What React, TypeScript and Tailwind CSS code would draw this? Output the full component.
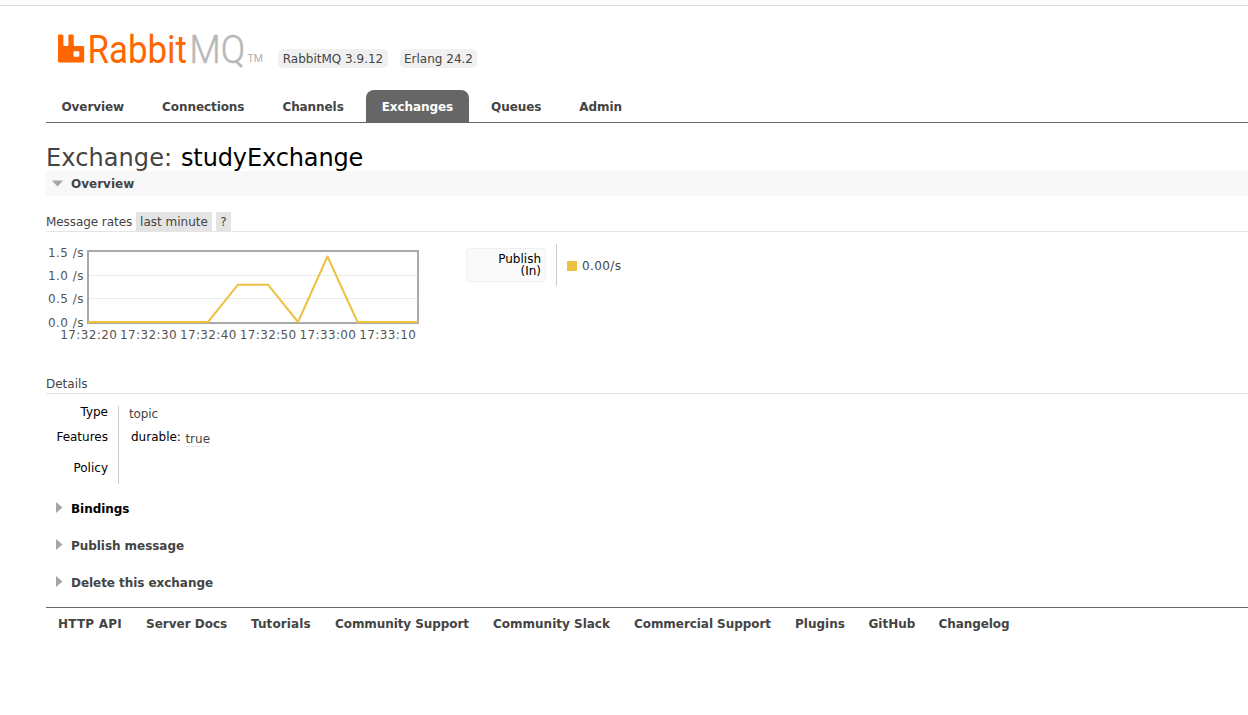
import clsx from "clsx";

const tabs = ["Overview", "Connections", "Channels", "Exchanges", "Queues", "Admin"];

const footerLinks = [
  { label: "HTTP API", width: "w-16 tracking-[0.2px]" },
  { label: "Server Docs", width: "w-[81px]" },
  { label: "Tutorials", width: "w-[60px] tracking-[0.1px]" },
  { label: "Community Support", width: "w-[134px] tracking-[-0.08px]" },
  { label: "Community Slack", width: "w-[117px]" },
  { label: "Commercial Support", width: "w-[137px] tracking-[-0.06px]" },
  { label: "Plugins", width: "w-[49.5px]" },
  { label: "GitHub", width: "w-[46px]" },
  { label: "Changelog", width: "tracking-[-0.08px]" },
];

const xLabels = ["17:32:20", "17:32:30", "17:32:40", "17:32:50", "17:33:00", "17:33:10"];
const yLabels = ["1.5 /s", "1.0 /s", "0.5 /s", "0.0 /s"];

function Logo() {
  return (
    <svg width="210" height="48" viewBox="0 -6 210 48" className="-mt-[6px] block" fontFamily="Roboto, sans-serif">
      <path
        fill="#ff6600"
        fillRule="evenodd"
        d="M2.200 4.500h3q1.200 0 1.200 1.200v9.300q0 1 1 1h3q1 0 1-1V5.700q0-1.200 1.200-1.200h2.900q1.200 0 1.200 1.200v9.300q0 1 1 1h8.300q1.200 0 1.200 1.200v14.100q0 1.200-1.200 1.200H2.200q-1.200 0-1.200-1.200V5.700q0-1.200 1.200-1.200zM17.500 21.200q-1 0-1 1v3.500q0 1 1 1h3.800q1 0 1-1v-3.500q0-1-1-1z"
      />
      <text x="30.500" y="32.700" fontSize="38.500" fill="#ff6600" textLength="99.500" lengthAdjust="spacingAndGlyphs">
        Rabbit
      </text>
      <text
        x="132.500"
        y="32.700"
        fontSize="38.500"
        fill="#b8b8b8"
        stroke="#b8b8b8"
        strokeWidth="0.500"
        fontWeight="300"
        textLength="55.500"
        lengthAdjust="spacingAndGlyphs"
      >
        MQ
      </text>
      <text x="190.500" y="32" fontSize="10" fill="#b0b0b0" textLength="15.500" lengthAdjust="spacingAndGlyphs">
        TM
      </text>
    </svg>
  );
}

function Section({ title, dark }: { title: string; dark?: boolean }) {
  return (
    <div className={clsx("flex h-[37px] items-center pl-[10px] font-bold", dark && "text-black")}>
      <svg width="7" height="14" className="mr-2">
        <path d="M0 0v11L6.500 5.500z" fill="#a5a5a5" />
      </svg>
      {title}
    </div>
  );
}

function RateChart() {
  return (
    <svg width="380" height="100" viewBox="0 0 380 100" className="block" fontSize="12" fill="#545454">
      <path d="M42 31.500h330M42 54.500h330" stroke="#ebebeb" />
      <rect x="42" y="7" width="330" height="72" fill="none" stroke="#a9a9a9" strokeWidth="2" />
      <path
        d="M42 78h120l30-37.300h30L252 78l29.500-65.500L311.500 78H372"
        fill="none"
        stroke="#edc240"
        strokeWidth="2"
        strokeLinejoin="round"
      />
      {yLabels.map((label, i) => (
        <text key={label} x="2" y={13 + i * 23.2} textLength="35.500">
          {label}
        </text>
      ))}
      {xLabels.map((label, i) => (
        <text key={label} x={14.3 + i * 59.8} y="95" textLength="56.500">
          {label}
        </text>
      ))}
    </svg>
  );
}

export default function App() {
  return (
    <div className="h-[715px] overflow-hidden bg-white pt-[5px] font-['DejaVu_Sans',sans-serif] text-[12px] leading-[16px] text-[#444]">
      <div className="border-t border-[#ddd] pl-[46px]">
        <header className="flex h-[84px] items-start pt-6 pl-[11px]">
          <Logo />
          <div className="mt-[19px] ml-[11px] flex gap-3">
            <span className="h-[19px] w-[110px] rounded-[5px] bg-[#f0f0f0] pt-[2px] text-center whitespace-nowrap">
              RabbitMQ 3.9.12
            </span>
            <span className="h-[19px] w-[77px] rounded-[5px] bg-[#f0f0f0] pt-[2px] text-center whitespace-nowrap">
              Erlang 24.2
            </span>
          </div>
        </header>

        <nav className="flex h-[33px] gap-[7px] border-b border-[#666] font-bold tracking-[-0.08px]">
          {tabs.map((tab) => (
            <a
              key={tab}
              className={clsx("h-8 rounded-t-[8px] px-[15.5px] pt-[9px]", tab === "Exchanges" && "bg-[#666] text-white")}
            >
              {tab}
            </a>
          ))}
        </nav>

        <h1 className="mt-[21px] h-[27px] text-[24px] leading-[28px]">
          <span className="tracking-[0.1px]">Exchange: </span>
          <b className="ml-px font-normal tracking-[-0.12px] text-black">studyExchange</b>
        </h1>

        <h2 className="flex h-[25px] items-center bg-[#f8f8f8] pl-[6px] font-bold">
          <svg width="12" height="7" className="mr-[7px]">
            <path d="M0 0.500h11L5.500 6.500z" fill="#a5a5a5" />
          </svg>
          Overview
        </h2>

        <div className="mt-4 flex h-5 items-start gap-1 border-b border-[#e4e4e4]">
          <span className="w-[86px] pt-[2px] tracking-[-0.07px] whitespace-nowrap">Message rates</span>
          <span className="h-[19px] w-[76px] bg-[#e4e4e4] pt-[2px] text-center whitespace-nowrap">last minute</span>
          <span className="h-[19px] w-[15px] bg-[#e4e4e4] pt-[2px] text-center">?</span>
        </div>

        <div className="flex h-[142px] pt-3">
          <RateChart />
          <div className="ml-10 flex h-[42px] items-center">
            <div className="h-[34px] w-[80px] rounded-[3px] border border-[#f0f0f0] bg-[#fafafa] pt-1 pr-1 text-right leading-[12px] text-black">
              Publish
              <br />
              (In)
            </div>
            <div className="ml-[10px] flex h-[42px] items-center border-l border-[#ccc] pt-[2px] pl-[10px] tracking-[0.4px]">
              <span className="mr-[5px] size-[10px] bg-[#edc240]" />
              0.00/s
            </div>
          </div>
        </div>

        <h3 className="h-5 border-b border-[#e4e4e4] pt-[2px]">Details</h3>
        <div className="mt-3 flex h-[78px]">
          <div className="w-[73px] border-r border-[#ccc] pr-[10px] text-right text-black">
            <div className="-mt-[2px] h-[25px]">Type</div>
            <div className="h-[31px]">Features</div>
            <div>Policy</div>
          </div>
          <div className="pl-[10px]">
            <div className="h-[25px] tracking-[-0.1px]">topic</div>
            <div className="flex pl-[2px]">
              <span className="-mt-[2px] mr-[4.5px] text-black">durable:</span>
              <span className="h-4 rounded-[3px] border-b border-dashed border-[#ddd]">true</span>
            </div>
          </div>
        </div>

        <div className="mt-[6px] h-[117px] tracking-[-0.05px]">
          <Section title="Bindings" dark />
          <Section title="Publish message" />
          <Section title="Delete this exchange" />
        </div>

        <footer className="flex gap-6 border-t border-[#666] pt-2 pl-3 font-bold whitespace-nowrap">
          {footerLinks.map(({ label, width }) => (
            <a key={label} className={width}>
              {label}
            </a>
          ))}
        </footer>
      </div>
    </div>
  );
}
